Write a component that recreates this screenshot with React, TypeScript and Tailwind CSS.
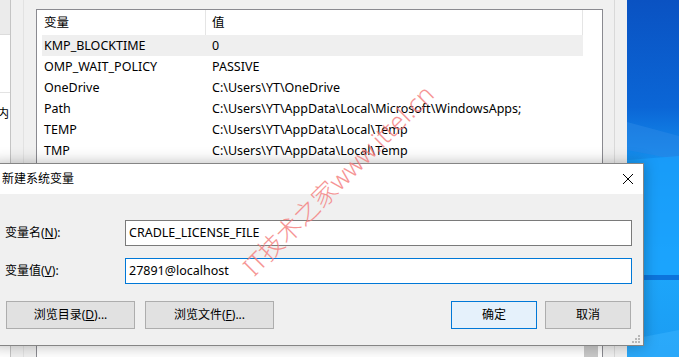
import React from "react";

const rows = [
  ["KMP_BLOCKTIME", "0"],
  ["OMP_WAIT_POLICY", "PASSIVE"],
  ["OneDrive", "C:\\Users\\YT\\OneDrive"],
  ["Path", "C:\\Users\\YT\\AppData\\Local\\Microsoft\\WindowsApps;"],
  ["TEMP", "C:\\Users\\YT\\AppData\\Local\\Temp"],
  ["TMP", "C:\\Users\\YT\\AppData\\Local\\Temp"],
];

function Wallpaper() {
  return (
    <svg width="52" height="357" viewBox="0 0 52 357" className="block">
      <defs>
        <linearGradient id="wg" x1="0" y1="0" x2="0" y2="1">
          <stop offset="0" stopColor="#0a52c2" />
          <stop offset="0.3" stopColor="#0b66d6" />
          <stop offset="0.45" stopColor="#1590ef" />
          <stop offset="0.75" stopColor="#1da6fb" />
          <stop offset="1" stopColor="#1b9cf2" />
        </linearGradient>
      </defs>
      <rect width="52" height="357" fill="url(#wg)" />
      <polygon points="0,122 52,136 52,160 0,150" fill="#2a86e6" opacity="0.55" />
      <polygon points="0,160 52,156 52,275 0,275" fill="#1aa4ff" opacity="0.6" />
      <rect x="0" y="275" width="52" height="5" fill="#0c74dc" />
      <polygon points="0,340 52,330 52,357 0,357" fill="#3ab4ff" opacity="0.5" />
    </svg>
  );
}

export default function App() {
  return (
    <div className="relative w-[679px] h-[357px] overflow-hidden bg-[#f0f0f0] font-['Noto_Sans','Noto_Sans_CJK_SC',sans-serif] text-[12.5px] text-black">
      {/* background window */}
      <div className="flex h-[357px]">
        <div className="w-[10px] flex flex-col overflow-hidden">
          <div className="h-[35px] bg-[#ebebeb] border-b border-[#dcdcdc]" />
          <div className="h-[58px] bg-white border-b border-[#e3e3e3]" />
          <div className="flex-1 bg-white pt-[14px]">
            <div className="ml-[-3px] leading-[14px] text-[12px] whitespace-nowrap">内</div>
          </div>
        </div>
        <div className="w-[1px] bg-[#c4c4c4]" />
        <div className="w-[12px]" />
        <div className="w-[1px] bg-[#e2e2e2]" />
        <div className="w-[12px]" />
        <div className="mt-[9px] w-[567px] border border-b-0 border-[#8a8a90] bg-white flex">
          <div className="w-[546px] flex flex-col">
            <div className="h-[25px] flex items-center">
              <div className="w-[168px] pl-[7px] leading-[25px]">变量</div>
              <div className="w-[1px] h-[25px] bg-[#e5e5e5]" />
              <div className="flex-1 pl-[6px] leading-[25px]">值</div>
              <div className="w-[1px] h-[25px] bg-[#e5e5e5]" />
            </div>
            <div className="pl-[5px]">
              {rows.map(([n, v], i) => (
                <div
                  key={n}
                  className={`flex h-[21px] items-center whitespace-nowrap ${i === 0 ? "bg-[#efefef]" : ""}`}
                >
                  <div className="w-[170px] pl-[2px] leading-[21px]">{n}</div>
                  <div className="leading-[21px]">{v}</div>
                </div>
              ))}
            </div>
          </div>
          <div className="flex-1 flex flex-col">
            <div className="flex-1" />
            <div className="h-[12px] ml-[1px] mr-[4px] bg-[#c9c9c9]" />
          </div>
        </div>
        <div className="w-[11px]" />
        <div className="w-[1px] bg-[#d9d9d9]" />
        <div className="w-[12px]" />
        <div className="w-[52px]">
          <Wallpaper />
        </div>
      </div>

      {/* dialog */}
      <div className="absolute left-[-10px] top-[163px] w-[654px] h-[183px] border border-[#858585] bg-[#f0f0f0] shadow-[0_0_14px_rgba(0,0,0,0.28)] flex flex-col">
        <div className="h-[30px] bg-white flex items-center justify-between pl-[11px] pr-[8px]">
          <span className="text-[12px] leading-[30px]">新建系统变量</span>
          <svg width="12" height="12" viewBox="0 0 12 12" className="mr-[1px]">
            <path d="M1 1 L11 11 M11 1 L1 11" stroke="#000" strokeWidth="1" />
          </svg>
        </div>
        <div className="flex-1 flex flex-col pt-[26px] pl-[14px] pr-[11px]">
          <div className="flex items-center h-[26px]">
            <div className="w-[120px] text-[12px]">
              变量名(<span className="underline">N</span>):
            </div>
            <div className="flex-1 h-[26px] border border-[#7a7a7a] bg-white pl-[3px] leading-[24px]">
              CRADLE_LICENSE_FILE
            </div>
          </div>
          <div className="flex items-center h-[26px] mt-[12px]">
            <div className="w-[120px] text-[12px]">
              变量值(<span className="underline">V</span>):
            </div>
            <div className="flex-1 h-[26px] border border-[#0078d7] bg-white pl-[3px] leading-[24px]">
              27891@localhost
            </div>
          </div>
          <div className="flex items-center mt-[17px] pl-[1px] pr-[1px]">
            <div className="w-[129px] h-[28px] border border-[#adadad] bg-[#e1e1e1] flex items-center justify-center text-[12px]">
              浏览目录(<span className="underline">D</span>)...
            </div>
            <div className="w-[129px] h-[28px] ml-[10px] border border-[#adadad] bg-[#e1e1e1] flex items-center justify-center text-[12px]">
              浏览文件(<span className="underline">F</span>)...
            </div>
            <div className="flex-1" />
            <div className="w-[86px] h-[28px] border border-[#0078d7] bg-[#e5f1fb] flex items-center justify-center text-[12px]">
              确定
            </div>
            <div className="w-[86px] h-[28px] ml-[8px] border border-[#adadad] bg-[#e1e1e1] flex items-center justify-center text-[12px]">
              取消
            </div>
          </div>
        </div>
        <svg width="10" height="10" viewBox="0 0 10 10" className="absolute right-[2px] bottom-[1px]">
          <g fill="#b8b8b8">
            <rect x="7" y="1" width="2" height="2" />
            <rect x="4" y="4" width="2" height="2" />
            <rect x="7" y="4" width="2" height="2" />
            <rect x="1" y="7" width="2" height="2" />
            <rect x="4" y="7" width="2" height="2" />
            <rect x="7" y="7" width="2" height="2" />
          </g>
        </svg>
      </div>

      {/* watermark */}
      <div className="absolute left-[338px] top-[180px] -translate-x-1/2 -translate-y-1/2 -rotate-45 whitespace-nowrap text-[25px] font-light leading-none text-[#f47a7a] opacity-80 pointer-events-none">
        IT技术之家www.ittel.cn
      </div>
    </div>
  );
}
